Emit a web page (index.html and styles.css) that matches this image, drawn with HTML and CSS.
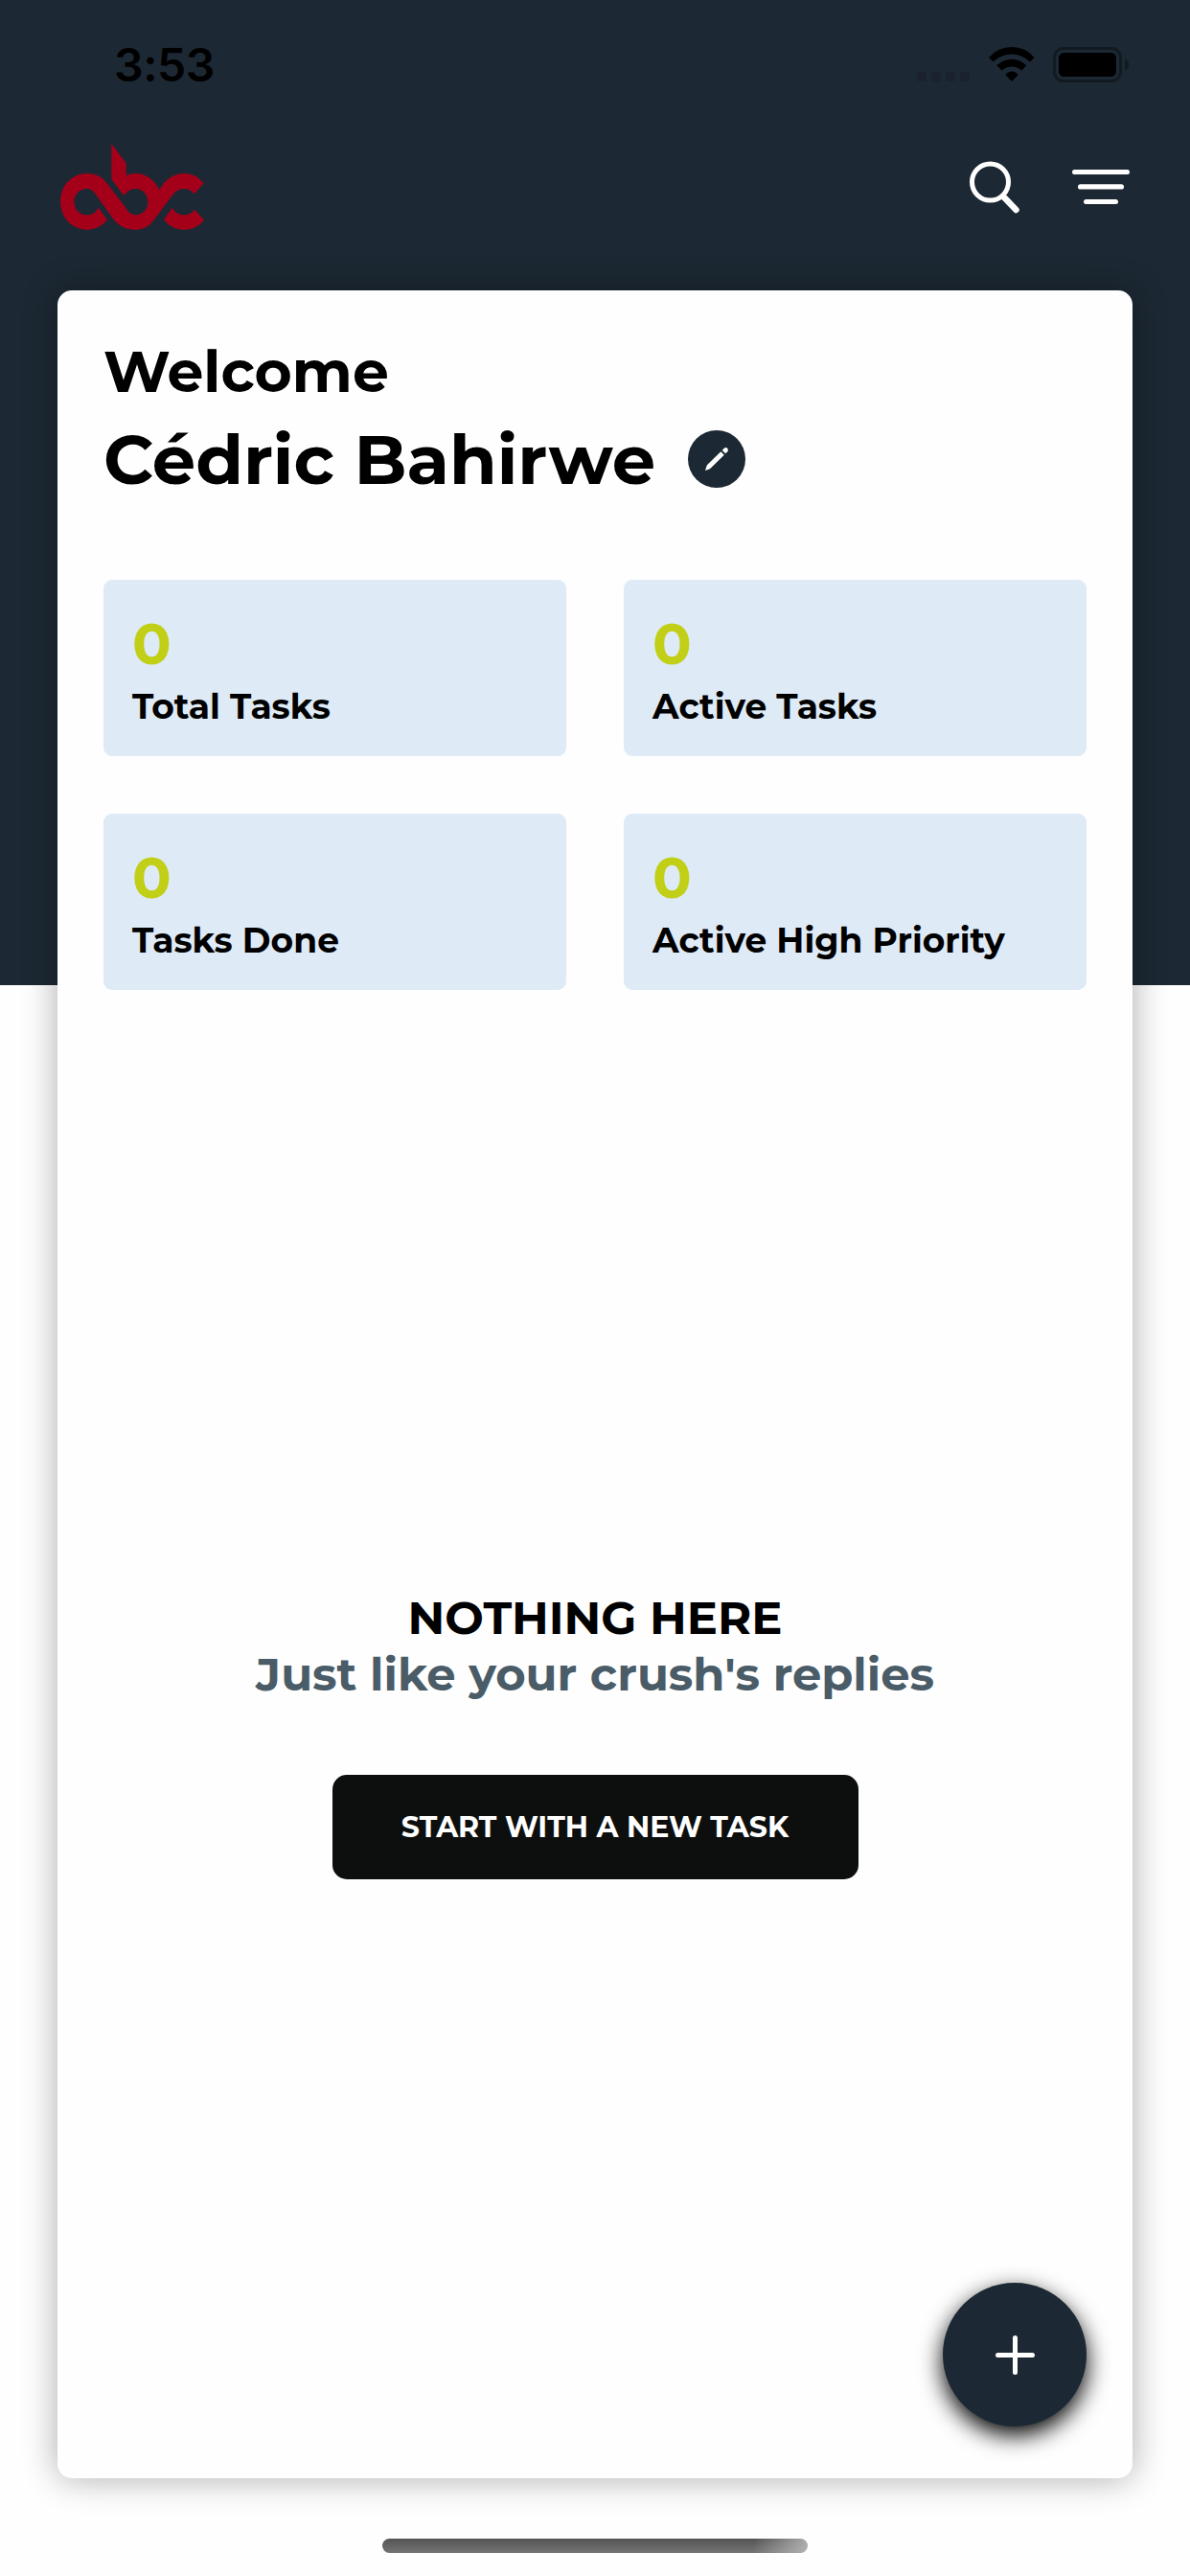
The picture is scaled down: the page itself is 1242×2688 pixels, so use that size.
FILE: index.html
```
<!DOCTYPE html>
<html lang="en">
<head>
<meta charset="utf-8">
<title>Tasks</title>
<link rel="stylesheet" href="styles.css">
</head>
<body>
<div class="screen">
  <div class="status-bar">
    <span class="time">3:53</span>
    <div class="status-icons">
      <svg class="cellular" width="55" height="10" viewBox="0 0 55 10" fill="#1b212e">
        <rect width="10" height="10" rx="3"/><rect x="15" width="10" height="10" rx="3"/><rect x="30" width="10" height="10" rx="3"/><rect x="45" width="10" height="10" rx="3"/>
      </svg>
      <svg class="wifi" width="48" height="36" viewBox="0 0 48 36">
        <path d="M0 11Q10 0 24 0Q38 0 47.500 11L43 15.500Q34 7.500 24 7.500Q13.500 7.500 4.500 15.500Z"/>
        <path d="M8.300 19.300Q15 12.700 24 12.700Q33 12.700 39.300 19.300L34.300 24.500Q29.500 20.500 24 20.500Q18.500 20.500 13.500 24.500Z"/>
        <path d="M17.300 29Q20 25.500 24 25.500Q28 25.500 30.700 29L24 36Z"/>
      </svg>
      <svg class="battery" width="80" height="37" viewBox="0 0 80 37">
        <rect x="1.500" y="1.500" width="69" height="34" rx="9.500" fill="none" stroke="#121a21" stroke-width="3"/>
        <rect x="6" y="6" width="60" height="25" rx="5.500"/>
        <path d="M75 12Q79 14 79 18.500Q79 23 75 25Z" fill="#121a21"/>
      </svg>
    </div>
  </div>

  <header class="app-bar">
    <svg class="logo" width="180" height="130" viewBox="0 0 540 390" fill="#a50019">
      <path d="M186 298C170 318 147 329 122 329C75 329 39 290 39 241C39 192 75 153 122 153C147 153 166 161 180 178L243 259C251 275 261 283 274 283C296 283 313 265 313 242C313 219 296 201 274 201C259 201 247 209 238 223L199 171V60L245 121V159Q258 153 274 153C307 153 332 171 349 204C368 172 392 153 427 153C453 153 472 165 488 184L458 217C450 206 439 201 427 201C410 201 399 209 389 222L334 296C318 318 299 329 274 329C246 329 222 318 205 296L152 222C144 209 136 201 122 201C99 201 82 219 82 242C82 265 99 283 122 283C139 283 150 275 158 260Z"/>
      <path d="M389 260C398 275 410 283 427 283C442 283 451 276 459 266L489 299C472 319 452 329 427 329C401 329 379 319 363 297Z"/>
    </svg>
    <div class="actions">
      <svg class="search" width="54" height="56" viewBox="0 0 54 56" fill="none" stroke="#fff" stroke-linecap="round">
        <circle cx="21.500" cy="22" r="19" stroke-width="5"/>
        <path d="M36.500 38.500L48.500 51" stroke-width="6.500"/>
      </svg>
      <svg class="menu" width="60" height="36" viewBox="0 0 60 36" fill="#fff">
        <rect width="60" height="5" rx="2.500"/><rect x="6" y="15.200" width="48" height="5.300" rx="2.600"/><rect x="12" y="31" width="36" height="5" rx="2.500"/>
      </svg>
    </div>
  </header>

  <main class="card">
    <h2 class="welcome">Welcome</h2>
    <div class="user">
      <h1 class="name">Cédric Bahirwe</h1>
      <button class="edit" aria-label="Edit name">
        <svg width="60" height="60" viewBox="0 0 60 60" fill="#fff">
          <path d="M18 42L19.500 37.200Q20 36.300 20.700 35.600L34.300 22.200L37.800 25.700L24 39.200Q23.200 40 22.300 40.400Z"/>
          <path d="M35.700 20.800L37.800 18.700Q39.600 17.300 41.200 18.800Q42.700 20.500 41.300 22.300L39.200 24.300Z"/>
        </svg>
      </button>
    </div>

    <section class="stats">
      <div class="stat"><span class="count">0</span><span class="label">Total Tasks</span></div>
      <div class="stat"><span class="count">0</span><span class="label">Active Tasks</span></div>
      <div class="stat"><span class="count">0</span><span class="label">Tasks Done</span></div>
      <div class="stat"><span class="count">0</span><span class="label">Active High Priority</span></div>
    </section>

    <section class="empty">
      <p class="empty-title">NOTHING HERE</p>
      <p class="empty-text">Just like your crush's replies</p>
      <button class="start">START WITH A NEW TASK</button>
    </section>

    <button class="fab" aria-label="Add task">
      <svg width="41" height="41" viewBox="0 0 41 41" stroke="#fff" stroke-width="5" stroke-linecap="round">
        <path d="M20.500 2.500V38.500M2.500 20.500H38.500"/>
      </svg>
    </button>
  </main>

  <div class="home-indicator"></div>
</div>
</body>
</html>
```
FILE: styles.css
```
* {
  box-sizing: border-box;
  margin: 0;
  padding: 0;
}

body {
  font-family: Montserrat, "Open Sans", sans-serif;
  font-weight: 700;
  color: #000;
  background: #fff;
}

button {
  border: 0;
  font: inherit;
}

svg {
  display: block;
}

.screen {
  display: flex;
  flex-direction: column;
  width: 1242px;
  height: 2688px;
  background: linear-gradient(#1c2833 1028px, #fefefe 1028px);
}

.status-bar {
  display: flex;
  justify-content: space-between;
  height: 130px;
  padding: 39px 63px 0 119px;
}

.time {
  font-family: Inter, sans-serif;
  font-size: 48px;
  font-weight: 560;
  line-height: 58px;
  letter-spacing: -0.4px;
}

.status-icons {
  display: flex;
  align-items: flex-start;
  padding-top: 10px;
}

.cellular {
  margin: 26px 20px 0 0;
}

.wifi {
  margin-right: 19px;
}

.app-bar {
  display: flex;
  justify-content: space-between;
  height: 173px;
  padding: 0 63px 0 50px;
}

.actions {
  display: flex;
  align-items: flex-start;
  padding-top: 38px;
}

.search {
  margin-right: 53px;
}

.menu {
  margin-top: 9px;
}

.card {
  position: relative;
  display: flex;
  flex-direction: column;
  height: 2283px;
  margin: 0 60px;
  padding: 49px 48px 0;
  border-radius: 15px;
  background: #fefefe;
  box-shadow: 0 0 36px rgba(0, 0, 0, 0.33);
}

.welcome {
  font-size: 60px;
  line-height: 72px;
}

.user {
  display: flex;
  align-items: center;
  gap: 34px;
  height: 60px;
  margin-top: 25px;
}

.name {
  font-size: 72px;
  line-height: 60px;
}

.edit {
  width: 60px;
  height: 60px;
  border-radius: 50%;
  background: #1c2833;
}

.stats {
  display: grid;
  grid-template-columns: 1fr 1fr;
  grid-auto-rows: 184px;
  gap: 60px;
  margin-top: 96px;
}

.stat {
  display: flex;
  flex-direction: column;
  padding: 31px 30px 0;
  border-radius: 9px;
  background: #deeaf6;
}

.count {
  font-size: 60px;
  line-height: 72px;
  color: #c1cf16;
}

.label {
  margin-top: 7px;
  font-size: 36px;
  line-height: 44px;
}

.empty {
  display: flex;
  flex-direction: column;
  align-items: center;
  margin-top: 626px;
}

.empty-title,
.empty-text {
  font-size: 48px;
  line-height: 59px;
}

.empty-text {
  color: #4a5c68;
}

.start {
  width: 549px;
  height: 109px;
  margin-top: 75px;
  border-radius: 15px;
  background: #0c0f0e;
  color: #fff;
  font-size: 30px;
}

.fab {
  position: absolute;
  right: 48px;
  bottom: 54px;
  display: flex;
  align-items: center;
  justify-content: center;
  width: 150px;
  height: 150px;
  border-radius: 50%;
  background: #1c2833;
  box-shadow: 0 9px 24px #000;
}

.home-indicator {
  width: 444px;
  height: 15px;
  margin: 63px 0 0 399px;
  border-radius: 8px;
  background:
    linear-gradient(100deg, transparent 87%, rgba(190, 190, 190, 0.85) 100%),
    linear-gradient(#545454, #747474);
}
```
